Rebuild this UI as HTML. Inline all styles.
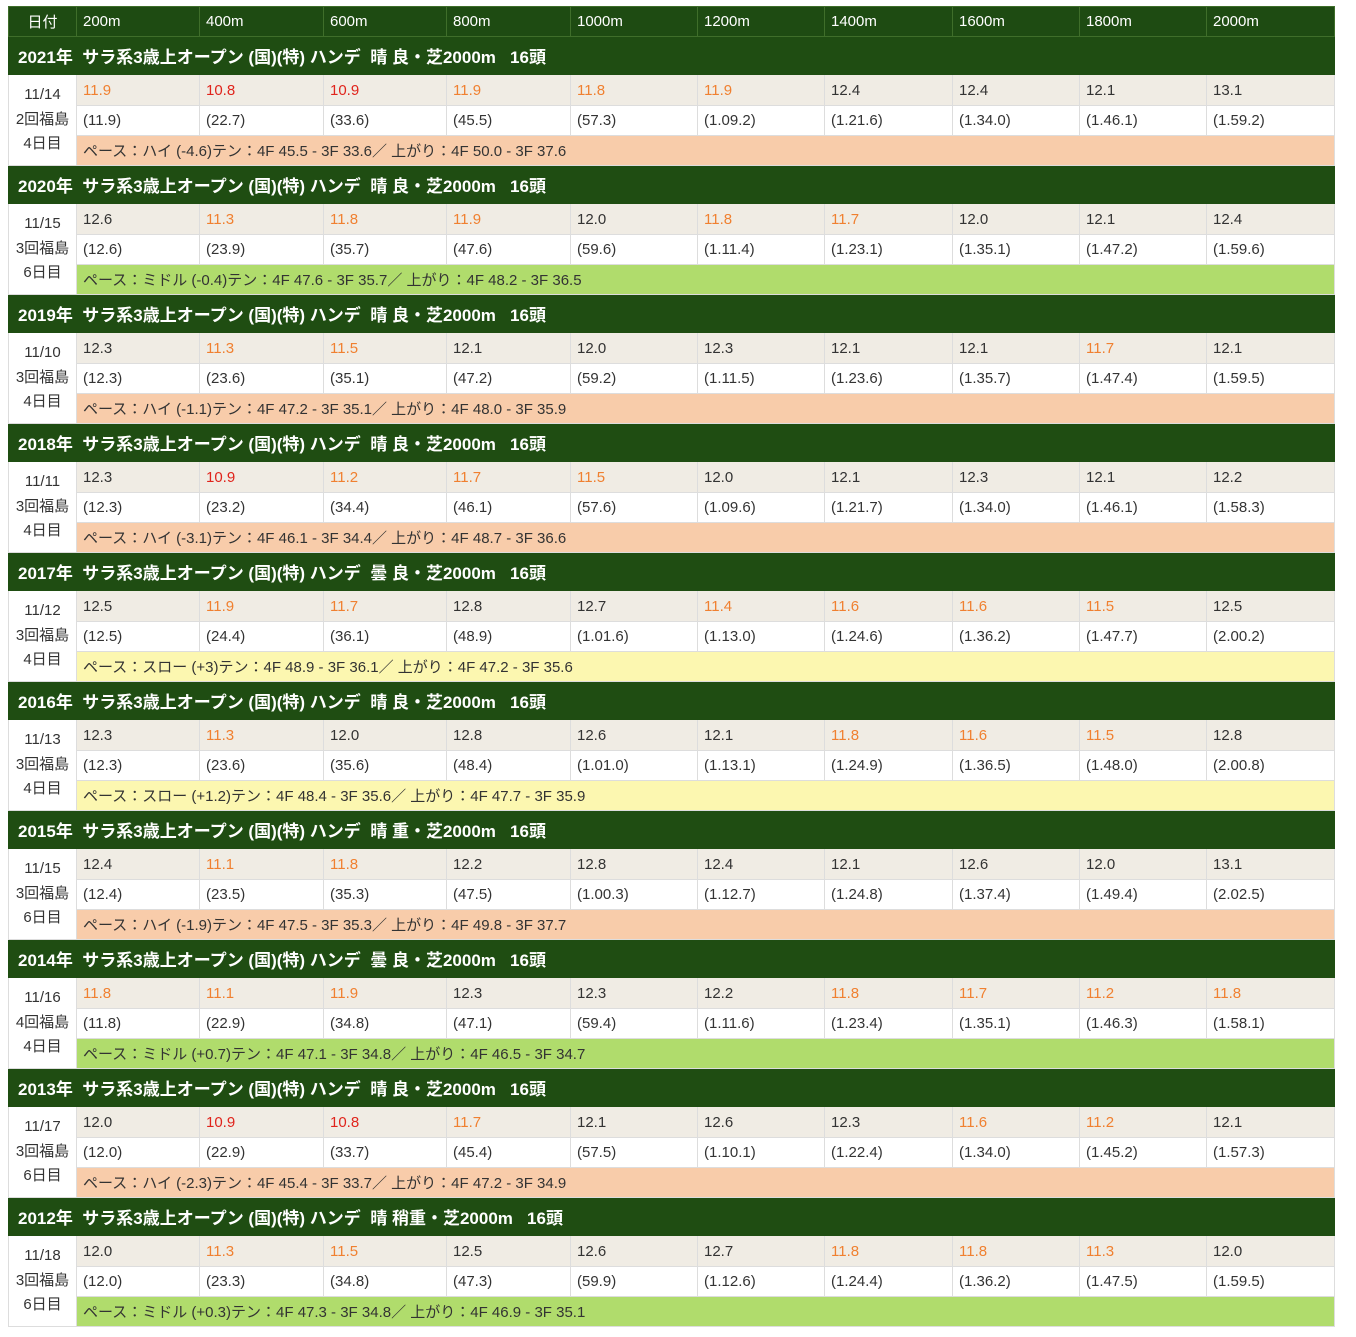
<!DOCTYPE html><html><head><meta charset="utf-8"><style>
body{margin:0;background:#fff;font-family:"Liberation Sans","Noto Sans CJK JP",sans-serif;color:#333}
table{position:absolute;left:8px;top:6px;width:1326px;border-collapse:collapse;table-layout:fixed;font-size:15px}
td,th{padding:0 0 0 6px;border:1px solid #ddd;white-space:nowrap;overflow:hidden}
.h th{background:#1e4b12;color:#fff;font-weight:normal;text-align:left;height:29px;border:1px solid #3f6e2a;font-size:15px}
.h th:first-child{text-align:center;padding:0}
.t td{background:#1f4d12;color:#fff;font-weight:bold;font-size:17px;height:37px;padding-left:9px;border-color:#1f4d12}
.s td{background:#f0ece4;height:30px}
.c td{background:#fff;height:29px}
.d{background:#fff!important;text-align:center;padding:0!important;line-height:24.5px;font-size:15px}
.p td.pc{height:29px}
.o{color:#f08030}.r{color:#e0241c}
.hi{background:#f8ccaa}.mi{background:#b0dc6c}.sl{background:#fcf7b0}
</style></head><body><table>
<colgroup><col style="width:68px"><col style="width:123px"><col style="width:124px"><col style="width:123px"><col style="width:124px"><col style="width:127px"><col style="width:127px"><col style="width:128px"><col style="width:127px"><col style="width:127px"><col style="width:128px"></colgroup>
<tr class="h"><th>日付</th><th>200m</th><th>400m</th><th>600m</th><th>800m</th><th>1000m</th><th>1200m</th><th>1400m</th><th>1600m</th><th>1800m</th><th>2000m</th></tr>

<tr class="t"><td colspan="11">2021年&nbsp; サラ系3歳上オープン (国)(特) ハンデ&nbsp; 晴 良・芝2000m&nbsp;&nbsp; 16頭</td></tr>
<tr class="s"><td class="d" rowspan="3">11/14<br>2回福島<br>4日目</td><td class="o">11.9</td><td class="r">10.8</td><td class="r">10.9</td><td class="o">11.9</td><td class="o">11.8</td><td class="o">11.9</td><td>12.4</td><td>12.4</td><td>12.1</td><td>13.1</td></tr>
<tr class="c"><td>(11.9)</td><td>(22.7)</td><td>(33.6)</td><td>(45.5)</td><td>(57.3)</td><td>(1.09.2)</td><td>(1.21.6)</td><td>(1.34.0)</td><td>(1.46.1)</td><td>(1.59.2)</td></tr>
<tr class="p"><td class="pc hi" colspan="10">ペース：ハイ (-4.6)テン：4F 45.5 - 3F 33.6／ 上がり：4F 50.0 - 3F 37.6</td></tr>

<tr class="t"><td colspan="11">2020年&nbsp; サラ系3歳上オープン (国)(特) ハンデ&nbsp; 晴 良・芝2000m&nbsp;&nbsp; 16頭</td></tr>
<tr class="s"><td class="d" rowspan="3">11/15<br>3回福島<br>6日目</td><td>12.6</td><td class="o">11.3</td><td class="o">11.8</td><td class="o">11.9</td><td>12.0</td><td class="o">11.8</td><td class="o">11.7</td><td>12.0</td><td>12.1</td><td>12.4</td></tr>
<tr class="c"><td>(12.6)</td><td>(23.9)</td><td>(35.7)</td><td>(47.6)</td><td>(59.6)</td><td>(1.11.4)</td><td>(1.23.1)</td><td>(1.35.1)</td><td>(1.47.2)</td><td>(1.59.6)</td></tr>
<tr class="p"><td class="pc mi" colspan="10">ペース：ミドル (-0.4)テン：4F 47.6 - 3F 35.7／ 上がり：4F 48.2 - 3F 36.5</td></tr>

<tr class="t"><td colspan="11">2019年&nbsp; サラ系3歳上オープン (国)(特) ハンデ&nbsp; 晴 良・芝2000m&nbsp;&nbsp; 16頭</td></tr>
<tr class="s"><td class="d" rowspan="3">11/10<br>3回福島<br>4日目</td><td>12.3</td><td class="o">11.3</td><td class="o">11.5</td><td>12.1</td><td>12.0</td><td>12.3</td><td>12.1</td><td>12.1</td><td class="o">11.7</td><td>12.1</td></tr>
<tr class="c"><td>(12.3)</td><td>(23.6)</td><td>(35.1)</td><td>(47.2)</td><td>(59.2)</td><td>(1.11.5)</td><td>(1.23.6)</td><td>(1.35.7)</td><td>(1.47.4)</td><td>(1.59.5)</td></tr>
<tr class="p"><td class="pc hi" colspan="10">ペース：ハイ (-1.1)テン：4F 47.2 - 3F 35.1／ 上がり：4F 48.0 - 3F 35.9</td></tr>

<tr class="t"><td colspan="11">2018年&nbsp; サラ系3歳上オープン (国)(特) ハンデ&nbsp; 晴 良・芝2000m&nbsp;&nbsp; 16頭</td></tr>
<tr class="s"><td class="d" rowspan="3">11/11<br>3回福島<br>4日目</td><td>12.3</td><td class="r">10.9</td><td class="o">11.2</td><td class="o">11.7</td><td class="o">11.5</td><td>12.0</td><td>12.1</td><td>12.3</td><td>12.1</td><td>12.2</td></tr>
<tr class="c"><td>(12.3)</td><td>(23.2)</td><td>(34.4)</td><td>(46.1)</td><td>(57.6)</td><td>(1.09.6)</td><td>(1.21.7)</td><td>(1.34.0)</td><td>(1.46.1)</td><td>(1.58.3)</td></tr>
<tr class="p"><td class="pc hi" colspan="10">ペース：ハイ (-3.1)テン：4F 46.1 - 3F 34.4／ 上がり：4F 48.7 - 3F 36.6</td></tr>

<tr class="t"><td colspan="11">2017年&nbsp; サラ系3歳上オープン (国)(特) ハンデ&nbsp; 曇 良・芝2000m&nbsp;&nbsp; 16頭</td></tr>
<tr class="s"><td class="d" rowspan="3">11/12<br>3回福島<br>4日目</td><td>12.5</td><td class="o">11.9</td><td class="o">11.7</td><td>12.8</td><td>12.7</td><td class="o">11.4</td><td class="o">11.6</td><td class="o">11.6</td><td class="o">11.5</td><td>12.5</td></tr>
<tr class="c"><td>(12.5)</td><td>(24.4)</td><td>(36.1)</td><td>(48.9)</td><td>(1.01.6)</td><td>(1.13.0)</td><td>(1.24.6)</td><td>(1.36.2)</td><td>(1.47.7)</td><td>(2.00.2)</td></tr>
<tr class="p"><td class="pc sl" colspan="10">ペース：スロー (+3)テン：4F 48.9 - 3F 36.1／ 上がり：4F 47.2 - 3F 35.6</td></tr>

<tr class="t"><td colspan="11">2016年&nbsp; サラ系3歳上オープン (国)(特) ハンデ&nbsp; 晴 良・芝2000m&nbsp;&nbsp; 16頭</td></tr>
<tr class="s"><td class="d" rowspan="3">11/13<br>3回福島<br>4日目</td><td>12.3</td><td class="o">11.3</td><td>12.0</td><td>12.8</td><td>12.6</td><td>12.1</td><td class="o">11.8</td><td class="o">11.6</td><td class="o">11.5</td><td>12.8</td></tr>
<tr class="c"><td>(12.3)</td><td>(23.6)</td><td>(35.6)</td><td>(48.4)</td><td>(1.01.0)</td><td>(1.13.1)</td><td>(1.24.9)</td><td>(1.36.5)</td><td>(1.48.0)</td><td>(2.00.8)</td></tr>
<tr class="p"><td class="pc sl" colspan="10">ペース：スロー (+1.2)テン：4F 48.4 - 3F 35.6／ 上がり：4F 47.7 - 3F 35.9</td></tr>

<tr class="t"><td colspan="11">2015年&nbsp; サラ系3歳上オープン (国)(特) ハンデ&nbsp; 晴 重・芝2000m&nbsp;&nbsp; 16頭</td></tr>
<tr class="s"><td class="d" rowspan="3">11/15<br>3回福島<br>6日目</td><td>12.4</td><td class="o">11.1</td><td class="o">11.8</td><td>12.2</td><td>12.8</td><td>12.4</td><td>12.1</td><td>12.6</td><td>12.0</td><td>13.1</td></tr>
<tr class="c"><td>(12.4)</td><td>(23.5)</td><td>(35.3)</td><td>(47.5)</td><td>(1.00.3)</td><td>(1.12.7)</td><td>(1.24.8)</td><td>(1.37.4)</td><td>(1.49.4)</td><td>(2.02.5)</td></tr>
<tr class="p"><td class="pc hi" colspan="10">ペース：ハイ (-1.9)テン：4F 47.5 - 3F 35.3／ 上がり：4F 49.8 - 3F 37.7</td></tr>

<tr class="t"><td colspan="11">2014年&nbsp; サラ系3歳上オープン (国)(特) ハンデ&nbsp; 曇 良・芝2000m&nbsp;&nbsp; 16頭</td></tr>
<tr class="s"><td class="d" rowspan="3">11/16<br>4回福島<br>4日目</td><td class="o">11.8</td><td class="o">11.1</td><td class="o">11.9</td><td>12.3</td><td>12.3</td><td>12.2</td><td class="o">11.8</td><td class="o">11.7</td><td class="o">11.2</td><td class="o">11.8</td></tr>
<tr class="c"><td>(11.8)</td><td>(22.9)</td><td>(34.8)</td><td>(47.1)</td><td>(59.4)</td><td>(1.11.6)</td><td>(1.23.4)</td><td>(1.35.1)</td><td>(1.46.3)</td><td>(1.58.1)</td></tr>
<tr class="p"><td class="pc mi" colspan="10">ペース：ミドル (+0.7)テン：4F 47.1 - 3F 34.8／ 上がり：4F 46.5 - 3F 34.7</td></tr>

<tr class="t"><td colspan="11">2013年&nbsp; サラ系3歳上オープン (国)(特) ハンデ&nbsp; 晴 良・芝2000m&nbsp;&nbsp; 16頭</td></tr>
<tr class="s"><td class="d" rowspan="3">11/17<br>3回福島<br>6日目</td><td>12.0</td><td class="r">10.9</td><td class="r">10.8</td><td class="o">11.7</td><td>12.1</td><td>12.6</td><td>12.3</td><td class="o">11.6</td><td class="o">11.2</td><td>12.1</td></tr>
<tr class="c"><td>(12.0)</td><td>(22.9)</td><td>(33.7)</td><td>(45.4)</td><td>(57.5)</td><td>(1.10.1)</td><td>(1.22.4)</td><td>(1.34.0)</td><td>(1.45.2)</td><td>(1.57.3)</td></tr>
<tr class="p"><td class="pc hi" colspan="10">ペース：ハイ (-2.3)テン：4F 45.4 - 3F 33.7／ 上がり：4F 47.2 - 3F 34.9</td></tr>

<tr class="t"><td colspan="11">2012年&nbsp; サラ系3歳上オープン (国)(特) ハンデ&nbsp; 晴 稍重・芝2000m&nbsp;&nbsp; 16頭</td></tr>
<tr class="s"><td class="d" rowspan="3">11/18<br>3回福島<br>6日目</td><td>12.0</td><td class="o">11.3</td><td class="o">11.5</td><td>12.5</td><td>12.6</td><td>12.7</td><td class="o">11.8</td><td class="o">11.8</td><td class="o">11.3</td><td>12.0</td></tr>
<tr class="c"><td>(12.0)</td><td>(23.3)</td><td>(34.8)</td><td>(47.3)</td><td>(59.9)</td><td>(1.12.6)</td><td>(1.24.4)</td><td>(1.36.2)</td><td>(1.47.5)</td><td>(1.59.5)</td></tr>
<tr class="p"><td class="pc mi" colspan="10">ペース：ミドル (+0.3)テン：4F 47.3 - 3F 34.8／ 上がり：4F 46.9 - 3F 35.1</td></tr>
</table></body></html>
